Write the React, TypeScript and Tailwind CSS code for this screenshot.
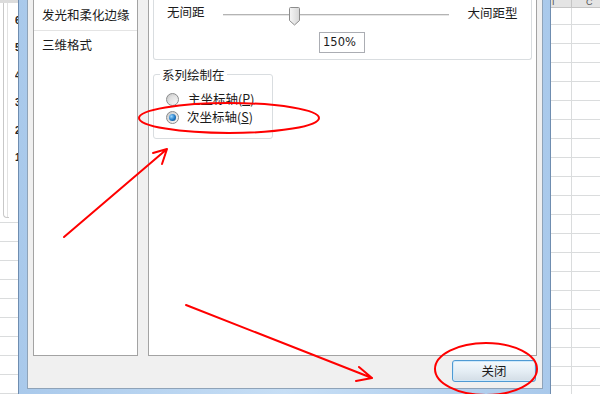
const leftRows = Array.from({ length: 9 });
const rightRows = Array.from({ length: 20 });
const axisLabels = ["6", "5", "4", "3", "2", "1"];

function LeftSheet() {
  return (
    <div className="flex w-[18px] shrink-0 flex-col bg-white">
      <div className="h-[5px] bg-[#dcdcdc]" />
      <div className="flex h-[220px]">
        <div className="ml-[3px] w-[6px] rounded-bl-[4px] border-b border-l border-[#c8c8c8]">
          <div className="ml-[3px] h-[214px] border-l border-[#e2e2e2]" />
        </div>
        <div className="ml-[6px] flex w-[3px] flex-col overflow-hidden pt-[4px] font-['Liberation_Sans',sans-serif] text-[10px] font-bold text-[#222]">
          {axisLabels.map((n) => (
            <span key={n} className="block h-[27.5px] leading-[27.5px]">
              {n}
            </span>
          ))}
        </div>
      </div>
      <div className="h-[9px] border-b border-[#dadcdd]" />
      {leftRows.map((_, i) => (
        <div key={i} className="h-[19px] shrink-0 border-b border-[#dadcdd]" />
      ))}
    </div>
  );
}

function RightSheet() {
  return (
    <div className="flex w-[49px] shrink-0 flex-col bg-white">
      <div className="flex h-[8px] shrink-0 border-b border-[#c5c5c5] bg-[#e4e4e4] font-['Liberation_Sans',sans-serif] text-[9px] leading-[4px] text-[#555]">
        <div className="w-[21px] border-r border-[#c5c5c5] pl-[1px]">I</div>
        <div className="flex-1 pl-[14px]">C</div>
      </div>
      <div className="flex h-[17px] shrink-0 border-b border-[#dadcdd]">
        <div className="w-[21px] border-r border-[#dadcdd]" />
      </div>
      {rightRows.map((_, i) => (
        <div key={i} className="flex h-[19px] shrink-0 border-b border-[#dadcdd]">
          <div className="w-[21px] border-r border-[#dadcdd]" />
        </div>
      ))}
    </div>
  );
}

function Radio({ checked }: { checked?: boolean }) {
  return (
    <span className="flex h-[13px] w-[13px] shrink-0 items-center justify-center rounded-full border border-[#8a8b8c] bg-gradient-to-br from-[#c9c9c9] to-[#fbfbfb]">
      <span
        className={
          checked
            ? "h-[7px] w-[7px] rounded-full bg-[radial-gradient(circle_at_35%_35%,#9ad6ff,#1f78c4_55%,#0d3f70)]"
            : "h-[7px] w-[7px] rounded-full bg-gradient-to-br from-[#d9d9d9] to-[#f4f4f4]"
        }
      />
    </span>
  );
}

function Slider() {
  return (
    <div className="relative h-[26px] w-[226px]">
      <div className="absolute left-0 right-0 top-[14px] h-[2px] border-t border-[#b4b4b4] bg-[#e6e6e6]" />
      <svg className="absolute left-[66px] top-[7px]" width="11" height="19" viewBox="0 0 11 19">
        <defs>
          <linearGradient id="thumb" x1="0" y1="0" x2="1" y2="0">
            <stop offset="0" stopColor="#f6f6f6" />
            <stop offset="1" stopColor="#d6d6d6" />
          </linearGradient>
        </defs>
        <path d="M0.5 1.5 Q0.5 0.5 1.5 0.5 H9.5 Q10.5 0.5 10.5 1.5 V13.5 L5.5 18 L0.5 13.5 Z" fill="url(#thumb)" stroke="#8c8c8c" />
      </svg>
    </div>
  );
}

function Dialog() {
  return (
    <div className="flex w-[533px] shrink-0 flex-col border-x border-[#6f8db0] bg-gradient-to-r from-[#a9c9eb] via-[#c6def5] to-[#a9c9eb] pb-[5px] pl-[8px] pr-[7px]">
      <div className="flex flex-1 flex-col border-x border-b border-[#8fa3b8] bg-[#f0f0f0]">
        <div className="flex h-[356px] gap-[10px] px-[5px]">
          <div className="w-[105px] border-x border-b border-[#a3a3a3] bg-white">
            <div className="flex h-[31px] items-center border-b border-[#e4e4e4] pl-[8px]">发光和柔化边缘</div>
            <div className="flex h-[28px] items-center pl-[8px]">三维格式</div>
          </div>
          <div className="flex flex-1 flex-col border-x border-b border-[#a3a3a3] bg-white px-[4px]">
            <div className="h-[60px] rounded-b-[3px] border-x border-b border-[#d9dde0]">
              <div className="flex h-[26px] items-start pl-[13px]">
                <span className="mt-[5px] leading-[14px]">无间距</span>
                <div className="ml-[18px]">
                  <Slider />
                </div>
                <span className="ml-[19px] mt-[6px] leading-[14px]">大间距型</span>
              </div>
              <div className="ml-[165px] mt-[6px] flex h-[21px] w-[46px] items-center border border-[#abadb3] bg-white pl-[3px] font-['DejaVu_Sans',sans-serif] text-[11.5px]">
                150%
              </div>
            </div>
            <fieldset className="mt-[8px] w-[120px] rounded-[3px] border border-[#d9dde0] pb-[12px] pl-[12px] pt-[9px]">
              <legend className="ml-[-6px] px-[2px] leading-[13px]">系列绘制在</legend>
              <label className="flex h-[18px] items-center gap-[9px] leading-[14px]">
                <Radio />
                <span>
                  主坐标轴(<span className="underline">P</span>)
                </span>
              </label>
              <label className="flex h-[18px] items-center gap-[8px] leading-[14px]">
                <Radio checked />
                <span>
                  次坐标轴(<span className="underline">S</span>)
                </span>
              </label>
            </fieldset>
          </div>
        </div>
        <div className="flex justify-end pr-[6px] pt-[4px]">
          <button className="flex h-[22px] w-[84px] items-center justify-center rounded-[3px] border border-[#4f9ad3] bg-gradient-to-b from-[#f4f9fc] via-[#e5eef5] to-[#d3dde6] leading-[14px] shadow-[inset_0_0_0_1px_#cfe9fb]">
            关闭
          </button>
        </div>
      </div>
    </div>
  );
}

function Annotations() {
  return (
    <svg className="pointer-events-none absolute inset-0" width="600" height="394" viewBox="0 0 600 394">
      <g fill="none" stroke="#ff0000" strokeWidth="2" strokeLinecap="round" strokeLinejoin="round">
        <ellipse cx="229" cy="118" rx="90" ry="15" />
        <path d="M64 237 L167 149 M153 153 L167 149 L162 164" />
        <path d="M186 305 L372 378 M359 367 L372 378 L356 381" />
        <ellipse cx="486" cy="369" rx="51" ry="26" />
      </g>
    </svg>
  );
}

export default function App() {
  return (
    <div className="relative flex h-[394px] w-[600px] overflow-hidden bg-white font-['Noto_Sans_CJK_SC','Noto_Sans',sans-serif] text-[12.5px] text-[#1b1b1b]">
      <LeftSheet />
      <Dialog />
      <RightSheet />
      <Annotations />
    </div>
  );
}
